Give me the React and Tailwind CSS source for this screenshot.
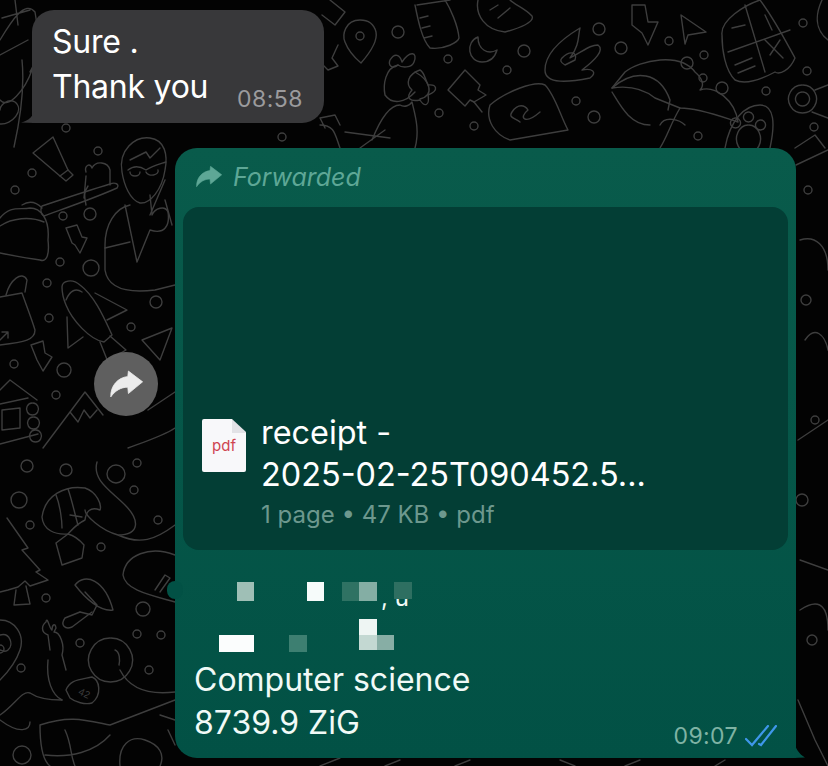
const circles = [
  [32,173,4],[15,190,4],[63,216,4],[90,214,6],[60,262,4],[91,268,8],[47,283,4],[156,302,6],[49,318,4],[131,327,4],[14,364,4],[64,370,7],[56,395,4],
  [27,466,6],[66,470,6],[116,474,9],[137,463,4],[19,500,8],[134,490,4],[30,525,4],[158,520,4],[101,547,4],[46,598,4],[143,609,7],[80,643,4],[137,634,4],[161,635,4],[21,668,4],[149,670,4],[22,755,9],
  [599,29,6],[621,48,6],[524,51,6],[507,70,4],[669,41,4],[687,63,6],[704,55,4],[703,78,4],[722,88,6],[766,91,4],[803,23,4],[807,71,4],[814,127,4],[439,113,4],[474,126,4],[576,101,4],[594,117,6],[698,136,4],[448,59,4],[66,128,4],[282,137,4],[98,151,4],[360,36,4],[398,32,6],[802,500,6],[812,640,5],[806,300,5],[815,420,4],[808,190,4]
];
const doodles = [
  "M33 153L53 137L68 170L73 175L66 181L60 176Z","M60 176L68 170",
  "M0 218C10 205 20 210 30 208C40 208 50 218 48 240C50 258 45 262 40 260C25 258 10 255 0 253","M0 226C12 218 30 216 44 222",
  "M62 287C62 281 72 278 80 285C95 296 105 320 112 335L104 342C90 340 72 320 66 305C63 298 62 292 62 287Z","M66 300C70 290 76 288 82 292","M95 293L127 310L107 320","M67 317L68 348L83 337","M100 342L108 362M110 336L126 350L112 358",
  "M66 228L77 225L82 237L87 238L80 253L75 245L72 243Z","M31 345L43 341L45 353L52 357L43 371L37 360Z",
  "M0 297L22 293C28 310 32 320 35 330C35 340 25 342 0 345","M6 295C10 280 22 270 27 280L25 292","M0 340L8 332M2 332L8 332L8 338",
  "M0 390L10 380L37 400","M0 404L28 398M0 444L38 434","M32 403a6 6 0 1 0 1 0M33 417a6 6 0 1 0 1 0M35 430a6 6 0 1 0 1 0","M2 410L20 408L20 428L2 430Z",
  "M43 448L85 392L103 415M70 412L78 422L84 410L90 418L97 410","M128 448C150 440 165 435 175 428M148 410L175 392M142 340L172 328L160 360Z",
  "M122 172C118 150 135 136 150 138C165 140 168 155 165 170C162 190 150 204 140 203C130 200 124 185 122 172Z","M130 160L146 152L150 158L160 148","M128 170C134 165 140 166 146 170C152 166 160 164 166 162M130 172a5 4 0 1 0 10 0M146 172a6 4 0 1 0 12 -2",
  "M130 205C115 208 105 225 105 245L105 270C108 290 130 293 155 290L175 285","M125 205L137 262L150 230C165 235 170 225 168 212C165 205 155 208 152 215L150 195","M105 248L130 242M150 215L165 180M165 200L172 225",
  "M14 147C20 120 25 90 22 60M0 124C12 125 25 110 15 102C8 98 0 105 0 110","M42 208C36 202 30 200 22 205M44 216C60 210 95 198 117 188C120 184 115 182 110 184C90 190 60 200 42 206C40 210 41 214 44 216Z","M86 205C84 195 84 192 88 186M86 172C84 166 90 162 92 168C96 160 108 162 110 170L110 185M84 198L86 176",
  "M42 517C45 495 65 485 85 488C97 492 102 505 100 510C90 506 86 512 85 520C75 525 72 530 68 534C55 535 43 530 42 517Z","M56 495C60 505 62 520 62 528M68 489C72 500 75 515 78 525M56 543L62 565L82 558L84 545C78 538 72 535 68 534L56 543M70 515L82 517",
  "M97 462C92 480 110 490 125 505C140 520 140 535 118 535C100 530 85 515 85 510M118 535C140 545 155 540 175 525","M175 555C150 545 125 555 123 575C125 590 150 595 175 602M155 590L165 575L170 578L160 592",
  "M7 518L28 548L22 550L40 570L36 572L48 580L30 586L25 581L18 587L8 590L0 592","M16 590L14 605L30 604L26 586",
  "M75 585C85 572 105 580 113 610C100 612 85 598 75 585ZM85 592L97 605L92 615L80 612","M80 612L65 618C60 625 65 630 72 627L92 612",
  "M0 620C15 620 25 635 20 650C15 665 5 675 0 680","M0 635C10 632 14 645 8 650C5 653 2 650 0 650","M0 645a4 4 0 0 1 0 8",
  "M50 650L48 635C40 632 42 625 46 622C47 615 50 630 52 630C52 625 55 622 56 628L54 632C60 632 65 645 62 655L66 670M48 660C46 680 52 695 62 700",
  "M110 638a22 22 0 1 0 1 0","M115 650C120 652 120 660 119 665","M66 690C70 680 78 680 92 677C100 680 102 695 92 703C85 705 75 702 70 698Z",
  "M0 715C15 705 22 690 30 693C40 700 60 700 62 700M0 720C20 735 30 730 30 722M40 725C70 715 85 720 110 725L175 700M40 725C40 745 42 760 50 766M65 730C72 745 70 755 75 766M45 755C70 758 95 752 110 735",
  "M120 670C130 690 150 695 175 692M120 766C118 745 130 735 145 740C160 745 165 755 160 766M175 720L160 715M168 730L175 745",
  "M0 40C12 20 25 0 35 12C40 40 38 60 30 72M0 100C8 110 25 90 32 70M15 0L18 25M2 18L30 10M0 55L28 40",
  "M360 20C345 20 342 35 345 42C348 50 355 58 361 63C368 55 378 42 376 32C374 24 368 20 360 20Z","M338 45L332 58L338 66L328 70L322 64M330 0L345 12L335 25L322 15",
  "M417 5L450 0M415 5C418 20 422 40 430 48C445 50 458 42 459 38C458 25 450 8 445 0M420 18L428 16M422 28L430 26M424 38L432 36",
  "M478 0C475 15 485 30 505 32C520 28 535 22 532 16C525 8 515 5 510 0","M490 10L498 5M498 18L510 8",
  "M478 37C465 42 468 62 482 62C490 62 495 57 497 50C488 55 478 50 478 37Z",
  "M420 70C408 74 405 84 412 90C405 98 410 102 420 100C425 108 430 105 428 95C440 90 436 84 428 85C425 78 424 72 420 70Z",
  "M390 60C395 52 400 55 402 62C410 50 418 52 414 62C412 68 402 68 398 65C392 70 388 65 390 60Z","M398 65C385 68 383 85 385 95C392 105 405 103 415 92M415 72C430 80 435 95 420 99M372 140C380 120 390 105 400 105C405 108 410 105 412 102C415 115 420 130 415 148",
  "M320 125C335 125 335 135 340 148M325 128L320 118L335 115L340 125M360 148L385 130M345 132L390 138",
  "M448 90L465 70L480 85L478 90L486 95L474 102L470 100L465 106Z","M474 102L482 112",
  "M490 105C505 92 535 80 545 85C555 95 560 115 568 130L510 140C495 135 485 120 490 105Z","M512 112C518 103 525 105 528 110C518 118 525 125 540 112M520 122C515 118 508 118 512 112",
  "M580 28C560 40 545 55 545 70C545 85 570 82 590 78C598 72 592 68 582 70C595 60 605 50 598 45C590 45 585 50 570 58C580 45 578 35 580 28Z","M562 58C570 50 578 52 575 60L565 65C560 62 560 60 562 58Z",
  "M632 5L645 5L648 22L658 22L648 45L642 33L632 25Z","M681 15L706 32L688 35L685 44Z",
  "M722 35C720 20 745 5 760 0C775 20 785 40 795 58C790 70 780 75 775 72C760 80 745 85 735 80C725 70 722 50 722 35Z","M745 5L765 72M728 52L790 30M732 28L745 25M765 15L772 30M770 55L780 40M765 40L783 58","M735 65L752 58M738 73L755 66",
  "M625 72C640 60 680 52 695 72C702 78 705 85 700 90C715 85 735 100 738 122C725 118 700 108 680 108L655 98C645 90 632 85 612 88L625 72Z","M612 88C635 68 660 72 670 100L668 110","M680 108C670 125 668 135 660 148M612 92C620 105 630 125 650 125M660 125C665 115 680 120 685 125",
  "M725 148C730 120 745 105 760 105C775 105 775 125 770 148","M735 118a5 5 0 1 0 1 0M748 112a5 5 0 1 0 1 0M760 120a5 5 0 1 0 1 0M748 125a12 14 0 1 0 1 0",
  "M802 85a14 14 0 1 0 1 0M802 92a7 7 0 1 0 1 0M815 90L828 85M812 112L828 118","M795 148L815 135L825 148M822 0C815 15 815 30 828 40",
  "M796 165L828 150M800 240C815 235 828 245 828 270M805 340C815 325 825 335 828 350M798 440L828 420M800 560L828 570M798 700L815 740L828 766M800 610C815 600 828 600 828 630",
  "M340 758L320 766M400 760L385 766M470 760L455 766M560 760L575 766M640 760L625 766M725 760L715 766",
];
const blocks = [
  "left-[237px] top-[582px] w-[17px] h-[19px] bg-[#9fbfb6]",
  "left-[307px] top-[582px] w-[17px] h-[19px] bg-[#f6fbfa]",
  "left-[342px] top-[582px] w-[17px] h-[19px] bg-[#2f7263]",
  "left-[359px] top-[582px] w-[18px] h-[19px] bg-[#84aea4]",
  "left-[394px] top-[582px] w-[18px] h-[17px] bg-[#2e6f61]",
  "left-[219px] top-[635px] w-[35px] h-[17px] bg-[#fbfdfd]",
  "left-[289px] top-[635px] w-[18px] h-[17px] bg-[#3d7f71]",
  "left-[359px] top-[619px] w-[18px] h-[16px] bg-[#eef5f3]",
  "left-[359px] top-[635px] w-[18px] h-[15px] bg-[#c3d8d2]",
  "left-[377px] top-[635px] w-[17px] h-[15px] bg-[#87aea5]",
];
const Arrow = ({ className, fill }) => (
  <svg viewBox="0 0 26 21" className={className}>
    <path d="M14.5 0.3L25.7 8.8L14.5 18L14 13C8.5 13 3.8 16 0.6 20.7C0.3 12 6 5.5 14 4.6Z" fill={fill} stroke={fill} strokeWidth="0.6" strokeLinejoin="round" />
  </svg>
);
export default function App() {
  return (
    <div className="relative w-[828px] h-[766px] overflow-hidden bg-[#030303] font-['Inter','Liberation_Sans',sans-serif] text-white">
      <svg className="absolute inset-0" width="828" height="766" fill="none" stroke="#3e3e3e" strokeWidth="1.4" strokeLinecap="round" strokeLinejoin="round">
        {circles.map(([x, y, r], i) => <circle key={i} cx={x} cy={y} r={r} />)}
        {doodles.map((d, i) => <path key={i} d={d} />)}
        <g transform="rotate(25 85 693)" fontSize="10" fill="#3e3e3e" stroke="none"><text x="79" y="697" fontFamily="Liberation Sans">42</text></g>
      </svg>

      <div className="relative flex flex-col items-start pt-[10px]">
        <div className="relative ml-[32px] w-[292px] h-[113px] rounded-[22px] rounded-bl-none bg-[#38383a] pl-[20px] pr-[21px] pt-[9px]">
          <svg className="absolute left-[-11px] bottom-0" width="14" height="14"><path d="M14 0C13 6 8 12 0 13.5L14 14Z" fill="#38383a" /></svg>
          <div className="text-[32px] leading-[45px] tracking-[-0.25px]">Sure .<br />Thank you</div>
          <div className="absolute right-[21px] bottom-[11px] text-[23px] leading-[26px] text-[#9b9b9d] tracking-[0.5px]">08:58</div>
        </div>

        <div className="relative ml-[175px] mt-[25px] w-[621px] h-[610px] rounded-[22px] rounded-br-none bg-linear-to-b from-[#095b4b] to-[#025145] px-[8px]">
          <svg className="absolute right-[-10px] bottom-0" width="12" height="18"><path d="M0 0C1 8 5 14 11 17.5L0 18Z" fill="#025145" /></svg>
          <div className="absolute left-[-8px] top-[433px] w-[16px] h-[18px] rounded-full bg-[#025145]" />
          <div className="flex items-center h-[59px] pl-[13px] pb-[2px]">
            <Arrow className="w-[26px] h-[21px]" fill="#5ea796" />
            <span className="ml-[11px] italic text-[25px] leading-[30px] text-[#5ea796]">Forwarded</span>
          </div>
          <div className="h-[343px] rounded-[16px] bg-[#033e35] flex items-end pl-[19px] pb-[21px]">
            <div className="flex items-start">
              <div className="relative mt-[7px] w-[44px] h-[53px] rounded-[2px] bg-[#f8f8fa] flex items-center justify-center">
                <svg className="absolute right-0 top-0" width="14" height="14"><path d="M0 0H0.5L14 13V14H0Z" fill="#e2e2e6" /><path d="M0 0L14 13V0Z" fill="#033e35" /></svg>
                <span className="text-[15px] leading-[18px] text-[#cf4550]">pdf</span>
              </div>
              <div className="ml-[15px] flex flex-col">
                <div className="text-[32.4px] leading-[42px]">receipt -<br />2025-02-25T090452.5...</div>
                <div className="mt-[5px] text-[24px] leading-[28px] text-[#6d988e]">1 page • 47 KB • pdf</div>
              </div>
            </div>
          </div>
          <div className="h-[108px]" />
          <div className="pl-[12px] ml-[-1px] text-[32px] leading-[43px] text-[#f1faf7]">Computer science<br />8739.9 ZiG</div>
          <div className="absolute right-[19px] bottom-[9px] flex items-center">
            <span className="text-[23px] leading-[26px] text-[#7fb3a4] tracking-[0.4px]">09:07</span>
            <svg className="ml-[7px]" width="32" height="22" viewBox="0 0 32 22" fill="none" stroke="#3f97ea" strokeWidth="2.2" strokeLinecap="round">
              <path d="M1 14L7 20L23 1" /><path d="M14 19L16 20L31 1" />
            </svg>
          </div>
        </div>
      </div>

      <div className="absolute left-[381px] top-[586px] text-[24px] leading-[24px] text-[#f1faf7] whitespace-pre">, u</div>
      {blocks.map((c, i) => <div key={i} className={"absolute " + c} />)}

      <div className="absolute left-[94px] top-[352px] w-[64px] h-[64px] rounded-full bg-[#646464]/95 flex items-center justify-center">
        <Arrow className="w-[33px] h-[28px]" fill="#ececec" />
      </div>
    </div>
  );
}
